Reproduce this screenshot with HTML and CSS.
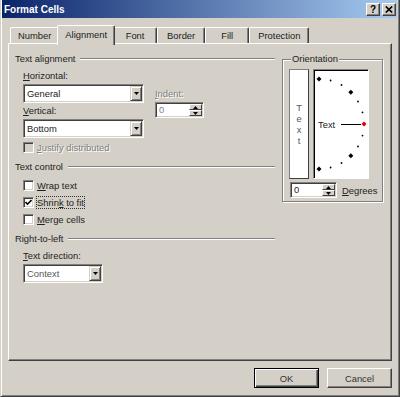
FILE: index.html
```html
<!DOCTYPE html>
<html>
<head>
    <title>Format Cells</title>
    <link rel="stylesheet" href="styles.css">
</head>
<body>
    <div class="window">
        <div class="titlebar">
            <span class="title">Format Cells</span>
            <span class="cap-btn help">?</span>
            <span class="cap-btn close">
                <svg width="8" height="7" viewBox="0 0 8 7"><path d="M0.8 0.5 L7.2 6.5 M7.2 0.5 L0.8 6.5" stroke="#000" stroke-width="1.7"/></svg>
            </span>
        </div>

        <div class="dialog">
            <div class="tabs">
                <div class="tab">Number</div>
                <div class="tab active">Alignment</div>
                <div class="tab">Font</div>
                <div class="tab">Border</div>
                <div class="tab">Fill</div>
                <div class="tab">Protection</div>
            </div>

            <div class="panel">
                <div class="main-col">
                    <!-- Text alignment -->
                    <div class="group-title">Text alignment</div>
                    <div class="group-body">
                        <div class="align-row">
                            <div class="align-col">
                                <div class="label"><u>H</u>orizontal:</div>
                                <div class="combo">
                                    <span class="combo-val">General</span>
                                    <span class="combo-btn"><svg width="5" height="3" viewBox="0 0 5 3"><path d="M0 0H5L2.5 3Z"/></svg></span>
                                </div>
                                <div class="label"><u>V</u>ertical:</div>
                                <div class="combo">
                                    <span class="combo-val">Bottom</span>
                                    <span class="combo-btn"><svg width="5" height="3" viewBox="0 0 5 3"><path d="M0 0H5L2.5 3Z"/></svg></span>
                                </div>
                            </div>
                            <div class="indent-col">
                                <div class="label disabled"><u>I</u>ndent:</div>
                                <div class="spin indent-spin">
                                    <span class="spin-val disabled">0</span>
                                    <span class="spin-btns">
                                        <span><svg width="5" height="3" viewBox="0 0 5 3"><path d="M0 3H5L2.5 0Z"/></svg></span>
                                        <span><svg width="5" height="3" viewBox="0 0 5 3"><path d="M0 0H5L2.5 3Z"/></svg></span>
                                    </span>
                                </div>
                            </div>
                        </div>
                        <div class="check-row justify">
                            <span class="check off"></span>
                            <span class="disabled"><u>J</u>ustify distributed</span>
                        </div>
                    </div>

                    <!-- Text control -->
                    <div class="group-title spaced">Text control</div>
                    <div class="group-body checks">
                        <div class="check-row">
                            <span class="check"></span>
                            <span><u>W</u>rap text</span>
                        </div>
                        <div class="check-row">
                            <span class="check">
                                <svg width="7" height="7" viewBox="0 0 7 7"><polyline points="0.5,3 2.5,5.2 6.5,1" fill="none" stroke="#000" stroke-width="1.6"/></svg>
                            </span>
                            <span class="focus">Shrin<u>k</u> to fit</span>
                        </div>
                        <div class="check-row">
                            <span class="check"></span>
                            <span><u>M</u>erge cells</span>
                        </div>
                    </div>

                    <!-- Right-to-left -->
                    <div class="group-title rtl">Right-to-left</div>
                    <div class="group-body">
                        <div class="label direction"><u>T</u>ext direction:</div>
                        <div class="combo narrow">
                            <span class="combo-val soft">Context</span>
                            <span class="combo-btn"><svg width="5" height="3" viewBox="0 0 5 3"><path d="M0 0H5L2.5 3Z"/></svg></span>
                        </div>
                    </div>
                </div>

                <div class="orientation">
                    <div class="orient-title">Orientation</div>
                    <div class="orient-boxes">
                        <div class="vtext">
                            <span>T</span><span>e</span><span>x</span><span>t</span>
                        </div>
                        <div class="dial">
                            <svg width="54" height="108" viewBox="0 0 54 108">
                                <g fill="#000">
                                    <polygon points="5,6.5 7.5,9 5,11.5 2.5,9"/>
                                    <polygon points="36.8,19.7 39.3,22.2 36.8,24.7 34.3,22.2"/>
                                    <polygon points="36.8,83.3 39.3,85.8 36.8,88.3 34.3,85.8"/>
                                    <polygon points="5,96.5 7.5,99 5,101.5 2.5,99"/>
                                    <circle cx="16.6" cy="10.5" r="0.9"/>
                                    <circle cx="27.5" cy="15" r="0.9"/>
                                    <circle cx="44" cy="31.5" r="0.9"/>
                                    <circle cx="48.5" cy="42.4" r="0.9"/>
                                    <circle cx="48.5" cy="65.6" r="0.9"/>
                                    <circle cx="44" cy="76.5" r="0.9"/>
                                    <circle cx="27.5" cy="93" r="0.9"/>
                                    <circle cx="16.6" cy="97.5" r="0.9"/>
                                </g>
                                <text x="4" y="58" class="dial-text">Text</text>
                                <path d="M27 54.5H47" stroke="#000" stroke-width="1"/>
                                <polygon points="50,51.5 52.5,54 50,56.5 47.5,54" fill="#e00000"/>
                            </svg>
                        </div>
                    </div>
                    <div class="degrees-row">
                        <div class="spin degrees-spin">
                            <span class="spin-val">0</span>
                            <span class="spin-btns">
                                <span><svg width="5" height="3" viewBox="0 0 5 3"><path d="M0 3H5L2.5 0Z"/></svg></span>
                                <span><svg width="5" height="3" viewBox="0 0 5 3"><path d="M0 0H5L2.5 3Z"/></svg></span>
                            </span>
                        </div>
                        <span><u>D</u>egrees</span>
                    </div>
                </div>
            </div>

            <div class="footer">
                <button class="btn default">OK</button>
                <button class="btn">Cancel</button>
            </div>
        </div>
    </div>
</body>
</html>
```

FILE: styles.css
```css
body { margin: 0; background: #d4d0c8; font-family: "Liberation Sans", Arial, sans-serif; font-size: 9.4px; color: #222; }
u { text-decoration: underline; text-underline-offset: 1px; }

.window { width: 400px; height: 397px; box-sizing: border-box; background: #d4d0c8; border-left: 1px solid #d4d0c8; border-right: 1px solid #404040; border-bottom: 1px solid #404040; box-shadow: inset 1px 0 #fff, inset -1px -1px #808080; padding: 0 2px 0 1px; }

.titlebar { height: 18px; display: flex; align-items: center; background: linear-gradient(to right, #0a246a, #a6caf0); padding: 0 1px 0 2px; }
.title { flex: 1; color: #fff; font-weight: bold; font-size: 10px; }
.cap-btn { width: 14px; height: 13px; box-sizing: border-box; display: flex; align-items: center; justify-content: center; background: #d4d0c8; border: 1px solid; border-color: #fff #404040 #404040 #fff; box-shadow: inset -1px -1px #808080; font-weight: bold; font-size: 10px; color: #000; }
.cap-btn.help { margin-right: 2px; }

.dialog { padding: 7px 5px 0 6px; }

/* tabs */
.tabs { display: flex; align-items: flex-end; height: 18px; padding-left: 2px; }
.tab { position: relative; height: 16px; line-height: 15px; box-sizing: border-box; min-width: 44px; padding: 0 7px; text-align: center; border: 1px solid; border-color: #fff #404040 transparent #fff; border-bottom: 0; border-radius: 2px 2px 0 0; box-shadow: inset -1px 0 #808080; }
.tab.active { height: 20px; line-height: 18px; margin: 0 -2px -2px; z-index: 1; background: #d4d0c8; }
.tab:nth-child(4) { padding: 0 9px; }
.tab:nth-child(6) { padding: 0 8px; }

.panel { height: 318px; box-sizing: border-box; border: 1px solid; border-color: #fff #404040 #404040 #fff; box-shadow: inset -1px -1px #808080; display: flex; gap: 7px; padding: 9px 8px 0 6px; }
.main-col { width: 260px; }

.group-title { display: flex; align-items: center; height: 12px; line-height: 12px; gap: 5px; }
.group-title::after { content: ""; flex: 1; border-top: 1px solid #808080; border-bottom: 1px solid #fff; }
.group-title.spaced { margin-top: 7px; }
.group-title.rtl { margin-top: 5px; }
.group-body { padding-left: 8px; }

.label { height: 12px; line-height: 12px; }
.label.direction { margin-top: 5px; }
.disabled { color: #808080; text-shadow: 1px 1px #fff; }

.align-row { display: flex; margin-top: 5px; }
.align-col { width: 121px; }
.indent-col { margin-left: 11px; padding-top: 18px; }

/* combo boxes */
.combo { display: flex; height: 19px; box-sizing: border-box; padding: 1px; background: #fff; border: 1px solid; border-color: #808080 #fff #fff #808080; box-shadow: inset 1px 1px #404040, inset -1px -1px #d4d0c8; margin-top: 2px; }
.combo + .label { margin-top: 2px; }
.combo.narrow { width: 80px; }
.combo-val { flex: 1; padding-left: 2px; line-height: 15px; }
.combo-val.soft { color: #555; }
.combo-btn { width: 12px; box-sizing: border-box; display: flex; align-items: center; justify-content: center; background: #d4d0c8; border: 1px solid; border-color: #d4d0c8 #404040 #404040 #d4d0c8; box-shadow: inset 1px 1px #fff, inset -1px -1px #808080; }

/* spin boxes */
.spin { display: flex; height: 16px; box-sizing: border-box; padding: 1px; background: #fff; border: 1px solid; border-color: #808080 #fff #fff #808080; box-shadow: inset 1px 1px #404040, inset -1px -1px #d4d0c8; }
.indent-spin { width: 49px; margin-top: 2px; }
.degrees-spin { width: 47px; margin-left: 1px; }
.spin-val { flex: 1; padding-left: 2px; line-height: 12px; }
.spin-btns { width: 13px; display: flex; flex-direction: column; }
.spin-btns span { flex: 1; display: flex; align-items: center; justify-content: center; background: #d4d0c8; border: 1px solid; border-color: #fff #404040 #404040 #fff; }
.spin-btns svg { width: 5px; height: 3px; }
.spin-btns path, .combo-btn path { fill: #000; }

/* check boxes */
.check-row { display: flex; align-items: center; gap: 3px; height: 17px; }
.check-row.justify { height: 13px; margin-top: 3px; }
.checks { margin-top: 4px; }
.check { width: 11px; height: 11px; box-sizing: border-box; display: flex; align-items: center; justify-content: center; background: #fff; border: 1px solid; border-color: #808080 #fff #fff #808080; box-shadow: inset 1px 1px #404040, inset -1px -1px #d4d0c8; }
.check.off { background: #d4d0c8; }
.focus { line-height: 11px; outline: 1px dotted #333; outline-offset: 0; }

/* orientation */
.orientation { width: 101px; height: 143px; box-sizing: border-box; margin-top: 6px; padding-left: 6px; border: 1px solid #808080; box-shadow: inset 1px 1px #fff, 1px 1px #fff; }
.orient-title { width: max-content; height: 12px; line-height: 12px; margin: -7px 0 0 2px; padding: 0 1px; background: #d4d0c8; }
.orient-boxes { display: flex; gap: 4px; height: 110px; margin-top: 4px; }
.vtext { width: 20px; box-sizing: border-box; display: flex; flex-direction: column; align-items: center; justify-content: center; line-height: 11px; color: #555; background: #fff; border: 1px solid; border-color: #808080 #404040 #404040 #808080; box-shadow: inset 1px 1px #fff; }
.dial { width: 56px; box-sizing: border-box; background: #fff; border: 1px solid; border-color: #808080 #fff #fff #808080; box-shadow: inset 1px 1px #000; }
.dial svg { display: block; }
.dial-text { font-family: "Liberation Sans", Arial, sans-serif; font-size: 9.4px; fill: #222; }
.degrees-row { display: flex; align-items: center; gap: 5px; margin-top: 3px; }

/* buttons */
.footer { display: flex; justify-content: flex-end; gap: 8px; margin-top: 7px; }
.btn { width: 65px; height: 20px; box-sizing: border-box; padding: 0; font-family: inherit; font-size: 9.4px; color: #333; background: #d4d0c8; border: 1px solid; border-color: #fff #404040 #404040 #fff; box-shadow: inset -1px -1px #808080; }
.btn.default { border-color: #000; box-shadow: inset 1px 1px #fff, inset -1px -1px #404040, inset -2px -2px #808080; }
```
